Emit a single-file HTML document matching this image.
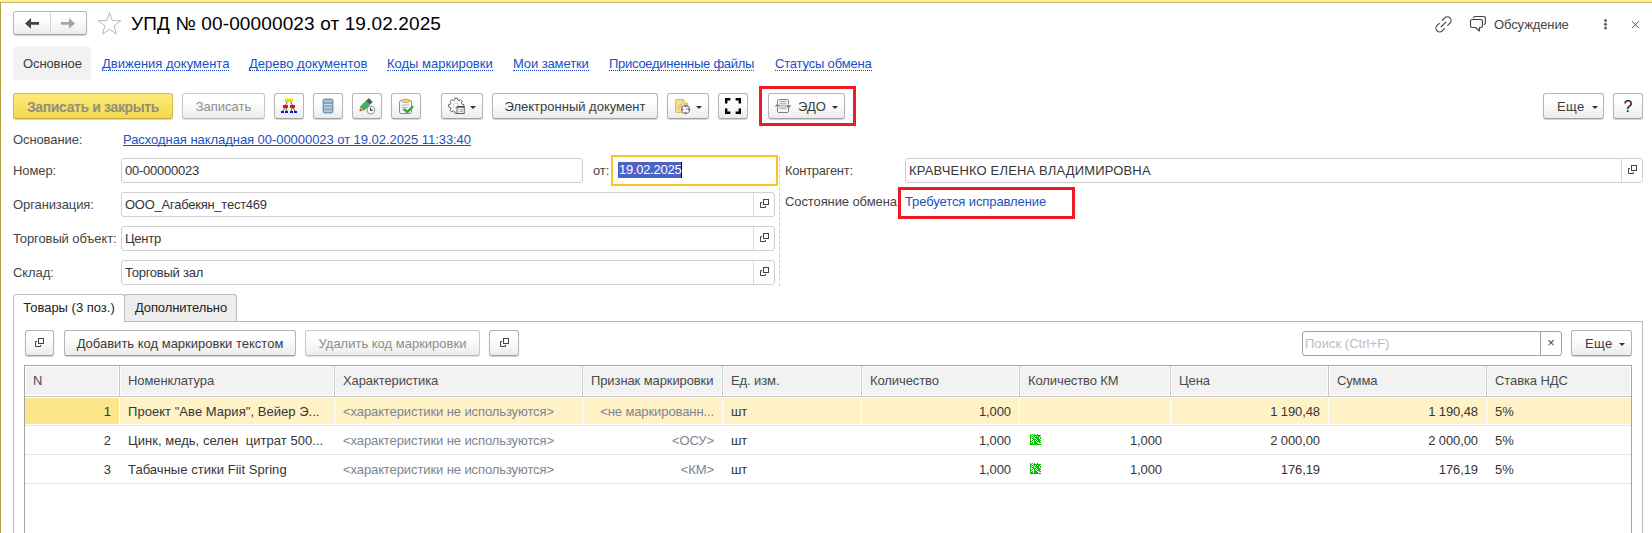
<!DOCTYPE html>
<html lang="ru">
<head>
<meta charset="utf-8">
<title>УПД № 00-00000023 от 19.02.2025</title>
<style>
*{box-sizing:border-box;margin:0;padding:0}
html,body{width:1652px;height:533px;overflow:hidden;background:#fff}
body{font-family:"Liberation Sans",Arial,sans-serif;font-size:13px;color:#454545;position:relative}
.abs{position:absolute}
#frame-top{left:0;top:0;width:1652px;height:3px;background:#fcec9c;border-bottom:1px solid #c8b864}
#frame-left{left:0;top:2px;width:1px;height:531px;background:#b3a347}
.btn{position:absolute;height:26px;border:1px solid #b4b4b4;border-bottom-color:#a2a2a2;border-radius:3px;background:linear-gradient(#ffffff 30%,#ececec);box-shadow:0 1px 1px rgba(0,0,0,.18);font-size:13px;line-height:26px;text-align:center;color:#3c3c3c;white-space:nowrap}
.btn.dis{color:#8e8e8e;border-color:#c8c8c8;border-bottom-color:#b4b4b4;box-shadow:0 1px 1px rgba(0,0,0,.12)}
.btn.yellow{background:linear-gradient(#fdeb78,#f4d94f);border-color:#d3bc4e;border-bottom-color:#c4ab3c;color:#918e7c;font-weight:bold;font-size:14px;letter-spacing:-0.37px}
.btn svg{position:absolute}
.lbl{position:absolute;white-space:nowrap;line-height:16px;height:16px;letter-spacing:-0.1px}
.inp{position:absolute;height:25px;border:1px solid #cfcfcf;border-radius:3px;background:#fff;line-height:23px;padding-left:3px;white-space:nowrap;overflow:hidden;color:#363636;letter-spacing:-0.25px}
.inp .sel{position:absolute;right:0;top:0;width:21px;height:23px;border-left:1px solid #d9d9d9}
a.lnk{color:#2350bf;text-decoration:underline;text-decoration-skip-ink:none;text-underline-offset:1px;text-decoration-thickness:1px}
.nav{position:absolute;top:56px;line-height:16px;color:#1a50c8;white-space:nowrap;border-bottom:1px dotted #1a50c8;height:15px}
.caret{position:absolute;width:0;height:0;border-left:3px solid transparent;border-right:3px solid transparent;border-top:3px solid #333}
.th{position:absolute;top:367px;height:28px;background:#f2f2f2;line-height:27px;color:#4a4a4a;white-space:nowrap;overflow:hidden;letter-spacing:-0.1px}
.td{position:absolute;height:28px;line-height:30px;letter-spacing:-0.1px;white-space:nowrap;overflow:hidden;color:#363636}
.td.r{text-align:right}
.td.g{color:#7d8590}
.rowline{position:absolute;left:25px;width:1606px;height:1px;background:#e6e6e6}
.km{width:11px;height:10px;background:#2fb52f}
</style>
</head>
<body>
<div id="frame-top" class="abs"></div>
<div id="frame-left" class="abs"></div>

<!-- title row -->
<div class="btn" style="left:13px;top:11px;width:74px;height:24px"></div>
<div class="abs" style="left:50px;top:12px;width:1px;height:22px;background:#d4d4d4"></div>
<svg class="abs" style="left:25px;top:17px" width="15" height="13" viewBox="0 0 15 13"><path d="M0 6.4 L6 1.1 V5.1 H14 V7.7 H6 V11.7 Z" fill="#444"/></svg>
<svg class="abs" style="left:60px;top:17px" width="15" height="13" viewBox="0 0 15 13"><path d="M15 6.4 L9 1.1 V5.1 H1 V7.7 H9 V11.7 Z" fill="#a4a4a4"/></svg>
<svg class="abs" style="left:97px;top:11px" width="25" height="25" viewBox="0 0 25 25"><path d="M12.50 1.50 L15.30 9.55 L23.82 9.72 L17.03 14.87 L19.49 23.03 L12.50 18.16 L5.51 23.03 L7.97 14.87 L1.18 9.72 L9.70 9.55 Z" fill="#fff" stroke="#b3bbc3" stroke-width="1"/></svg>
<div class="abs" style="left:131px;top:12px;font-size:19px;line-height:24px;color:#000;white-space:nowrap;letter-spacing:0.13px">УПД № 00-00000023 от 19.02.2025</div>

<svg class="abs" style="left:1433px;top:14px" width="21" height="21" viewBox="0 0 21 21" fill="none" stroke="#444" stroke-width="1.15" stroke-linecap="round"><g transform="translate(10.5,10.4) rotate(-45)"><path d="M2.2 -3.7 H5.5 A3.7 3.7 0 0 1 5.5 3.7 H2.2 M-2.2 -3.7 H-5.5 A3.7 3.7 0 0 0 -5.5 3.7 H-2.2 M-3.3 0 H3.3"/></g></svg>
<svg class="abs" style="left:1469px;top:15px" width="18" height="18" viewBox="0 0 18 18" fill="none" stroke="#444" stroke-width="1.15" stroke-linecap="round" stroke-linejoin="round"><path d="M4.6 2.9 a1.4 1.4 0 0 1 1.4 -1.4 H15 a1.4 1.4 0 0 1 1.4 1.4 V8 a1.4 1.4 0 0 1 -1.2 1.4"/><path d="M2.9 4.5 H12 a1.4 1.4 0 0 1 1.4 1.4 V11.1 a1.4 1.4 0 0 1 -1.4 1.4 H10.6 L10.4 16 L6.6 12.5 H2.9 a1.4 1.4 0 0 1 -1.4 -1.4 V5.9 a1.4 1.4 0 0 1 1.4 -1.4 Z" fill="#fff"/></svg>
<div class="lbl" style="left:1494px;top:17px">Обсуждение</div>
<div class="abs" style="left:1603.6px;top:19.4px;width:3px;height:3px;border-radius:50%;background:#666;box-shadow:0 3.7px 0 #666,0 7.4px 0 #666"></div>
<svg class="abs" style="left:1631px;top:20px" width="9" height="9" viewBox="0 0 9 9" stroke="#555" stroke-width="1"><path d="M1 1.2 L8 8.2 M8 1.2 L1 8.2"/></svg>

<!-- nav row -->
<div class="abs" style="left:13px;top:46px;width:78px;height:34px;background:#f2f2f2;border-radius:4px"></div>
<div class="lbl" style="left:23px;top:56px;color:#3c3c3c">Основное</div>
<div class="nav" style="left:102px">Движения документа</div>
<div class="nav" style="left:249px">Дерево документов</div>
<div class="nav" style="left:387px">Коды маркировки</div>
<div class="nav" style="left:513px;letter-spacing:-0.11px">Мои заметки</div>
<div class="nav" style="left:609px;letter-spacing:-0.27px">Присоединенные файлы</div>
<div class="nav" style="left:775px;letter-spacing:-0.18px">Статусы обмена</div>

<!-- toolbar -->
<div class="btn yellow" style="left:13px;top:93px;width:160px">Записать и закрыть</div>
<div class="btn dis" style="left:182px;top:93px;width:83px">Записать</div>
<div class="btn" style="left:274px;top:93px;width:30px" id="b1"></div>
<div class="btn" style="left:313px;top:93px;width:30px" id="b2"></div>
<div class="btn" style="left:352px;top:93px;width:30px" id="b3"></div>
<div class="btn" style="left:391px;top:93px;width:30px" id="b4"></div>
<div class="btn" style="left:441px;top:93px;width:42px" id="b5"><span class="caret" style="left:28px;top:12px"></span></div>
<div class="btn" style="left:492px;top:93px;width:166px">Электронный документ</div>
<div class="btn" style="left:667px;top:93px;width:42px" id="b6"><span class="caret" style="left:28px;top:12px"></span></div>
<div class="btn" style="left:718px;top:93px;width:30px" id="b7"></div>
<div class="btn" style="left:768px;top:93px;width:77px;text-align:left;padding-left:29px" id="b8">ЭДО<span class="caret" style="left:63px;top:12px"></span></div>
<div class="abs" style="left:759px;top:86px;width:97px;height:40px;border:3px solid #ed1c24"></div>
<div class="btn" style="left:1543px;top:93px;width:61px;text-align:left;padding-left:13px;letter-spacing:0.4px">Еще<span class="caret" style="left:48px;top:12px"></span></div>
<div class="btn" style="left:1613px;top:93px;width:30px;font-size:16px;line-height:25px;color:#111">?</div>


<!-- toolbar icons -->
<svg class="abs" style="left:280px;top:97px" width="18" height="18" viewBox="0 0 18 18">
<path d="M7.5 5 L5.5 8 M10.5 5 L12.5 8 M5 11 L2.8 14 M6 11 L6.8 14 M12 11 L11.2 14 M13 11 L15.2 14" stroke="#333" stroke-width="0.8" fill="none"/>
<rect x="5" y="1" width="8" height="4" fill="#e6e000"/><rect x="5" y="1" width="8" height="1" fill="#f5f060"/>
<rect x="3" y="8" width="5" height="3" fill="#f01010"/><rect x="10" y="8" width="5" height="3" fill="#f01010"/>
<rect x="1" y="14" width="3" height="2" fill="#0018e8"/><rect x="5" y="14" width="3" height="2" fill="#0018e8"/><rect x="10" y="14" width="3" height="2" fill="#0018e8"/><rect x="14" y="14" width="3" height="2" fill="#0018e8"/>
</svg>
<svg class="abs" style="left:322px;top:98px" width="12" height="16" viewBox="0 0 12 16">
<rect x="1" y="1" width="10" height="14" rx="1.5" fill="#84a4c0" stroke="#6a8cab" stroke-width="0.8"/>
<rect x="2" y="2.6" width="8" height="1.2" fill="#c9d9e7"/><rect x="2" y="6" width="8" height="1.2" fill="#c9d9e7"/><rect x="2" y="9.2" width="8" height="1.2" fill="#c9d9e7"/><rect x="2" y="12.4" width="8" height="1.2" fill="#c9d9e7"/>
</svg>
<svg class="abs" style="left:358px;top:97px" width="20" height="18" viewBox="0 0 20 18">
<path d="M1.7 14 L2.82 9.44 L6.28 12.94 Z" fill="#e9b86c" stroke="#a5793a" stroke-width="0.6"/>
<path d="M1.7 14 L2.2 12 L3.7 13.5 Z" fill="#6b4a20"/>
<path d="M2.82 9.44 L8.73 3.62 L12.19 7.12 L6.28 12.94 Z" fill="#41b25f" stroke="#2c8a45" stroke-width="0.8"/>
<path d="M8.73 3.62 L10.93 1.44 L14.39 4.94 L12.19 7.12 Z" fill="#4c5966" stroke="#3e4852" stroke-width="0.6"/>
<circle cx="12.8" cy="13" r="3.9" fill="#fff" stroke="#7896b2" stroke-width="1"/>
<path d="M12.6 10.8 V13.2 H14.8" stroke="#222" stroke-width="1.1" fill="none"/>
</svg>
<svg class="abs" style="left:397px;top:97px" width="18" height="18" viewBox="0 0 18 18">
<rect x="2.5" y="3.5" width="12" height="13" rx="1.5" fill="#f3f7fb" stroke="#7d92a8" stroke-width="1"/>
<rect x="5.5" y="2.3" width="6.5" height="3" rx="1" fill="#fbe07a" stroke="#c9952a" stroke-width="0.9"/>
<path d="M5 8 H12 M5 10.5 H10.5 M5 13 H7" stroke="#9db0c3" stroke-width="0.9"/>
<path d="M7.6 12.6 L10.2 15.2 L15.4 10" stroke="#3aa52a" stroke-width="2.4" fill="none" stroke-linecap="round" stroke-linejoin="round"/>
</svg>
<svg class="abs" style="left:448px;top:97px" width="20" height="18" viewBox="0 0 20 18">
<path d="M7.0 1.2 h2.4 l0.4 1.9 l1.3 0.55 l1.6 -1.1 l1.7 1.7 l-1.1 1.6 l0.55 1.3 l1.9 0.4 v2.4 l-1.9 0.4 l-0.55 1.3 l1.1 1.6 l-1.7 1.7 l-1.6 -1.1 l-1.3 0.55 l-0.4 1.9 h-2.4 l-0.4 -1.9 l-1.3 -0.55 l-1.6 1.1 l-1.7 -1.7 l1.1 -1.6 l-0.55 -1.3 l-1.9 -0.4 v-2.4 l1.9 -0.4 l0.55 -1.3 l-1.1 -1.6 l1.7 -1.7 l1.6 1.1 l1.3 -0.55 Z" fill="#fff" stroke="#555" stroke-width="0.9"/>
<circle cx="8.2" cy="8.4" r="2.6" fill="#fff" stroke="#888" stroke-width="0.8" stroke-dasharray="1.2 0.8"/>
<rect x="9" y="9.5" width="7.2" height="7" fill="#fff" stroke="#4a4a4a" stroke-width="0.9"/>
<rect x="9" y="9.5" width="7.2" height="1.3" fill="#555"/>
<path d="M10.4 12.7 h1 M12.2 12.7 h2.6 M10.4 14.7 h1 M12.2 14.7 h2.6" stroke="#666" stroke-width="0.8"/>
</svg>
<svg class="abs" style="left:674px;top:98px" width="18" height="18" viewBox="0 0 18 18">
<path d="M2.4 1.5 H9.5 L13.5 5.5 V14.5 H2.4 a0.9 0.9 0 0 1 -0.9 -0.9 V2.4 a0.9 0.9 0 0 1 0.9 -0.9 Z" fill="#f5e08e" stroke="#d6b24c" stroke-width="0.9"/>
<path d="M9.5 1.5 V5.5 H13.5" fill="#faedb8" stroke="#d6b24c" stroke-width="0.7"/>
<path d="M3.5 6.6 H5 M6 6.6 H8 M3.5 8.6 H4.3 M5 8.6 H7.5 M3.5 10.6 H6" stroke="#d2b050" stroke-width="0.8"/>
<circle cx="11.6" cy="11.5" r="4" fill="#fff" stroke="#5a8cc4" stroke-width="1.3"/>
<circle cx="11.6" cy="8.6" r="0.75" fill="#e81818"/><circle cx="11.6" cy="14.4" r="0.75" fill="#e81818"/><circle cx="8.7" cy="11.5" r="0.75" fill="#e81818"/><circle cx="14.5" cy="11.5" r="0.75" fill="#e81818"/>
<path d="M11.6 11.5 L13.2 9.6 L13.4 11 Z" fill="#7aa2d6" stroke="#7aa2d6" stroke-width="0.5"/>
</svg>
<svg class="abs" style="left:725px;top:98px" width="16" height="16" viewBox="0 0 16 16">
<path d="M1.2 5.4 V1.2 H5.4 M10.6 1.2 H14.8 V5.4 M14.8 10.6 V14.8 H10.6 M5.4 14.8 H1.2 V10.6" fill="none" stroke="#000" stroke-width="2.4"/>
</svg>
<svg class="abs" style="left:774px;top:98px" width="18" height="16" viewBox="0 0 18 16">
<path d="M3.5 5.5 V2.7 a1.2 1.2 0 0 1 1.2 -1.2 H13.3 a1.2 1.2 0 0 1 1.2 1.2 V6.6 M14.5 10.2 V13.3 a1.2 1.2 0 0 1 -1.2 1.2 H4.7 a1.2 1.2 0 0 1 -1.2 -1.2 V9" fill="none" stroke="#7c7c7c" stroke-width="1"/>
<path d="M5.5 3.6 H12.5 M5.5 5.8 H12.5 M5.5 8 H12.5 M5.5 10.2 H12.5" stroke="#8c8c8c" stroke-width="0.9"/>
<path d="M0.8 8.6 L3.5 5.4 L6.2 8.6 Z" fill="#7c7c7c"/>
<path d="M11.8 7.2 L14.5 10.4 L17.2 7.2 Z" fill="#7c7c7c"/>
</svg>

<!-- form -->
<div class="lbl" style="left:13px;top:132px">Основание:</div>
<div class="lbl" style="left:123px;top:132px;letter-spacing:-0.05px"><a class="lnk">Расходная накладная 00-00000023 от 19.02.2025 11:33:40</a></div>

<div class="lbl" style="left:13px;top:163px">Номер:</div>
<div class="inp" style="left:121px;top:158px;width:462px">00-00000023</div>
<div class="lbl" style="left:593px;top:163px">от:</div>
<div class="abs" style="left:611px;top:155px;width:167px;height:31px;border:2px solid #fbc31c;background:#fff"></div>
<div class="abs" style="left:618px;top:162px;height:16px;line-height:16px;background:#4e62c4;color:#fff;padding:0 0 0 1px;white-space:nowrap;border-right:1px solid #000;letter-spacing:-0.27px">19.02.2025</div>
<div class="lbl" style="left:785px;top:163px;letter-spacing:-0.28px">Контрагент:</div>
<div class="inp" style="left:905px;top:158px;width:738px;letter-spacing:0.16px">КРАВЧЕНКО ЕЛЕНА ВЛАДИМИРОВНА<span class="sel"><svg style="position:absolute;left:5px;top:5px" width="11" height="11" viewBox="0 0 11 11" fill="none" stroke="#444" stroke-width="1"><rect x="4.5" y="1.5" width="5" height="5"/><path d="M3 4.5 H1.5 V9.5 H6.5 V8"/></svg></span></div>

<div class="lbl" style="left:13px;top:197px">Организация:</div>
<div class="inp" style="left:121px;top:192px;width:654px">ООО_Агабекян_тест469<span class="sel"><svg style="position:absolute;left:5px;top:5px" width="11" height="11" viewBox="0 0 11 11" fill="none" stroke="#444" stroke-width="1"><rect x="4.5" y="1.5" width="5" height="5"/><path d="M3 4.5 H1.5 V9.5 H6.5 V8"/></svg></span></div>
<div class="lbl" style="left:785px;top:194px">Состояние обмена:</div>
<div class="lbl" style="left:905px;top:194px;color:#2350bf">Требуется исправление</div>
<div class="abs" style="left:898px;top:187px;width:177px;height:32px;border:3px solid #ed1c24"></div>

<div class="lbl" style="left:13px;top:231px">Торговый объект:</div>
<div class="inp" style="left:121px;top:226px;width:654px">Центр<span class="sel"><svg style="position:absolute;left:5px;top:5px" width="11" height="11" viewBox="0 0 11 11" fill="none" stroke="#444" stroke-width="1"><rect x="4.5" y="1.5" width="5" height="5"/><path d="M3 4.5 H1.5 V9.5 H6.5 V8"/></svg></span></div>
<div class="lbl" style="left:13px;top:265px">Склад:</div>
<div class="inp" style="left:121px;top:260px;width:654px">Торговый зал<span class="sel"><svg style="position:absolute;left:5px;top:5px" width="11" height="11" viewBox="0 0 11 11" fill="none" stroke="#444" stroke-width="1"><rect x="4.5" y="1.5" width="5" height="5"/><path d="M3 4.5 H1.5 V9.5 H6.5 V8"/></svg></span></div>
<div class="abs" style="left:779px;top:157px;width:1px;height:129px;background:repeating-linear-gradient(#d2d2d2 0,#d2d2d2 4px,transparent 4px,transparent 6px)"></div>

<!-- tabs -->
<div class="abs" style="left:13px;top:321px;width:1630px;height:212px;border:1px solid #b8b8b8;border-bottom:none"></div>
<div class="abs" style="left:13px;top:294px;width:112px;height:28px;border:1px solid #bdbdbd;border-bottom:none;border-radius:3px 3px 0 0;background:#fff;line-height:26px;text-align:center;color:#222">Товары (3 поз.)</div>
<div class="abs" style="left:124px;top:294px;width:113px;height:27px;border:1px solid #bdbdbd;border-bottom:none;border-radius:3px 3px 0 0;background:#ededed;line-height:26px;text-align:left;padding-left:10px;letter-spacing:-0.12px;color:#222">Дополнительно</div>

<!-- table toolbar -->
<div class="btn" style="left:25px;top:330px;width:29px" id="t1"><svg style="position:absolute;left:8px;top:6px" width="11" height="11" viewBox="0 0 11 11" fill="none" stroke="#444" stroke-width="1"><rect x="4.5" y="1.5" width="5" height="5"/><path d="M3 4.5 H1.5 V9.5 H6.5 V8"/></svg></div>
<div class="btn" style="left:64px;top:330px;width:232px">Добавить код маркировки текстом</div>
<div class="btn dis" style="left:305px;top:330px;width:175px">Удалить код маркировки</div>
<div class="btn" style="left:489px;top:330px;width:30px" id="t2"><svg style="position:absolute;left:9px;top:6px" width="11" height="11" viewBox="0 0 11 11" fill="none" stroke="#444" stroke-width="1"><rect x="4.5" y="1.5" width="5" height="5"/><path d="M3 4.5 H1.5 V9.5 H6.5 V8"/></svg></div>
<div class="inp" style="left:1302px;top:331px;width:239px;border-radius:3px 0 0 3px;color:#bcbcc2;border-color:#a4a4a4;padding-left:2px;letter-spacing:0.03px">Поиск (Ctrl+F)</div>
<div class="abs" style="left:1540px;top:331px;width:22px;height:25px;border:1px solid #a4a4a4;border-radius:0 3px 3px 0;line-height:22px;text-align:center;color:#444">×</div>
<div class="btn" style="left:1571px;top:330px;width:61px;text-align:left;padding-left:13px;letter-spacing:0.4px">Еще<span class="caret" style="left:47px;top:12px"></span></div>

<!-- table -->
<div class="abs" style="left:24px;top:365px;width:1608px;height:168px;border:1px solid #a6a6a6;border-bottom:none"></div>
<div class="abs" style="left:25px;top:396px;width:1606px;height:1px;background:#c6c6c6"></div>
<div class="th" style="left:26px;width:92px;padding-left:7px">N</div>
<div class="th" style="left:121px;width:212px;padding-left:7px">Номенклатура</div>
<div class="th" style="left:336px;width:245px;padding-left:7px">Характеристика</div>
<div class="th" style="left:584px;width:137px;padding-left:7px">Признак маркировки</div>
<div class="th" style="left:724px;width:136px;padding-left:7px">Ед. изм.</div>
<div class="th" style="left:863px;width:155px;padding-left:7px">Количество</div>
<div class="th" style="left:1021px;width:148px;padding-left:7px">Количество КМ</div>
<div class="th" style="left:1172px;width:155px;padding-left:7px">Цена</div>
<div class="th" style="left:1330px;width:155px;padding-left:7px">Сумма</div>
<div class="th" style="left:1488px;width:142px;padding-left:7px">Ставка НДС</div>
<div class="abs" style="left:119px;top:366px;width:1px;height:30px;background:#c6c6c6"></div>
<div class="abs" style="left:334px;top:366px;width:1px;height:30px;background:#c6c6c6"></div>
<div class="abs" style="left:582px;top:366px;width:1px;height:30px;background:#c6c6c6"></div>
<div class="abs" style="left:722px;top:366px;width:1px;height:30px;background:#c6c6c6"></div>
<div class="abs" style="left:861px;top:366px;width:1px;height:30px;background:#c6c6c6"></div>
<div class="abs" style="left:1019px;top:366px;width:1px;height:30px;background:#c6c6c6"></div>
<div class="abs" style="left:1170px;top:366px;width:1px;height:30px;background:#c6c6c6"></div>
<div class="abs" style="left:1328px;top:366px;width:1px;height:30px;background:#c6c6c6"></div>
<div class="abs" style="left:1486px;top:366px;width:1px;height:30px;background:#c6c6c6"></div>
<div class="abs" style="left:25px;top:398px;width:94px;height:26px;background:#fde58c"></div>
<div class="abs" style="left:120px;top:398px;width:214px;height:26px;background:#fef2c6"></div>
<div class="abs" style="left:335px;top:398px;width:247px;height:26px;background:#fef2c6"></div>
<div class="abs" style="left:583px;top:398px;width:139px;height:26px;background:#fef2c6"></div>
<div class="abs" style="left:723px;top:398px;width:138px;height:26px;background:#fef2c6"></div>
<div class="abs" style="left:862px;top:398px;width:157px;height:26px;background:#fef2c6"></div>
<div class="abs" style="left:1020px;top:398px;width:150px;height:26px;background:#fef2c6"></div>
<div class="abs" style="left:1171px;top:398px;width:157px;height:26px;background:#fef2c6"></div>
<div class="abs" style="left:1329px;top:398px;width:157px;height:26px;background:#fef2c6"></div>
<div class="abs" style="left:1487px;top:398px;width:144px;height:26px;background:#fef2c6"></div>
<div class="rowline" style="top:425px"></div>
<div class="rowline" style="top:454px"></div>
<div class="rowline" style="top:483px"></div>
<!-- row 1 -->
<div class="td r" style="left:26px;top:397px;width:85px">1</div>
<div class="td" style="left:128px;top:397px;width:204px;letter-spacing:0.04px">Проект "Аве Мария", Вейер Э...</div>
<div class="td g" style="left:343px;top:397px;width:237px">&lt;характеристики не используются&gt;</div>
<div class="td g r" style="left:586px;top:397px;width:128px">&lt;не маркированн...</div>
<div class="td" style="left:731px;top:397px;width:100px">шт</div>
<div class="td r" style="left:870px;top:397px;width:141px">1,000</div>
<div class="td r" style="left:1180px;top:397px;width:140px">1 190,48</div>
<div class="td r" style="left:1338px;top:397px;width:140px">1 190,48</div>
<div class="td" style="left:1495px;top:397px;width:100px">5%</div>
<!-- row 2 -->
<div class="td r" style="left:26px;top:426px;width:85px">2</div>
<div class="td" style="left:128px;top:426px;width:204px;letter-spacing:0.04px">Цинк, медь, селен&nbsp; цитрат 500...</div>
<div class="td g" style="left:343px;top:426px;width:237px">&lt;характеристики не используются&gt;</div>
<div class="td g r" style="left:586px;top:426px;width:128px">&lt;ОСУ&gt;</div>
<div class="td" style="left:731px;top:426px;width:100px">шт</div>
<div class="td r" style="left:870px;top:426px;width:141px">1,000</div>
<svg class="abs" style="left:1030px;top:434px" width="11" height="11" viewBox="0 0 11 11" shape-rendering="crispEdges"><path d="M0 0h1v1h-1zM2 0h1v1h-1zM4 0h1v1h-1zM7 0h1v1h-1zM0 1h2v1h-2zM3 1h8v1h-8zM0 2h1v1h-1zM2 2h1v1h-1zM4 2h1v1h-1zM6 2h1v1h-1zM8 2h2v1h-2zM0 3h2v1h-2zM3 3h1v1h-1zM5 3h4v1h-4zM10 3h1v1h-1zM0 4h1v1h-1zM2 4h2v1h-2zM6 4h3v1h-3zM10 4h1v1h-1zM0 5h1v1h-1zM3 5h3v1h-3zM7 5h3v1h-3zM0 6h1v1h-1zM2 6h1v1h-1zM4 6h1v1h-1zM6 6h1v1h-1zM8 6h3v1h-3zM0 7h2v1h-2zM4 7h2v1h-2zM7 7h3v1h-3zM0 8h1v1h-1zM2 8h1v1h-1zM4 8h3v1h-3zM9 8h2v1h-2zM0 9h3v1h-3zM4 9h4v1h-4zM0 10h11v1h-11z" fill="#00c000"/></svg>
<div class="td r" style="left:1050px;top:426px;width:112px">1,000</div>
<div class="td r" style="left:1180px;top:426px;width:140px">2 000,00</div>
<div class="td r" style="left:1338px;top:426px;width:140px">2 000,00</div>
<div class="td" style="left:1495px;top:426px;width:100px">5%</div>
<!-- row 3 -->
<div class="td r" style="left:26px;top:455px;width:85px">3</div>
<div class="td" style="left:128px;top:455px;width:204px;letter-spacing:0.04px">Табачные стики Fiit Spring</div>
<div class="td g" style="left:343px;top:455px;width:237px">&lt;характеристики не используются&gt;</div>
<div class="td g r" style="left:586px;top:455px;width:128px">&lt;КМ&gt;</div>
<div class="td" style="left:731px;top:455px;width:100px">шт</div>
<div class="td r" style="left:870px;top:455px;width:141px">1,000</div>
<svg class="abs" style="left:1030px;top:463px" width="11" height="11" viewBox="0 0 11 11" shape-rendering="crispEdges"><path d="M0 0h1v1h-1zM2 0h1v1h-1zM4 0h1v1h-1zM7 0h1v1h-1zM0 1h2v1h-2zM3 1h8v1h-8zM0 2h1v1h-1zM2 2h1v1h-1zM4 2h1v1h-1zM6 2h1v1h-1zM8 2h2v1h-2zM0 3h2v1h-2zM3 3h1v1h-1zM5 3h4v1h-4zM10 3h1v1h-1zM0 4h1v1h-1zM2 4h2v1h-2zM6 4h3v1h-3zM10 4h1v1h-1zM0 5h1v1h-1zM3 5h3v1h-3zM7 5h3v1h-3zM0 6h1v1h-1zM2 6h1v1h-1zM4 6h1v1h-1zM6 6h1v1h-1zM8 6h3v1h-3zM0 7h2v1h-2zM4 7h2v1h-2zM7 7h3v1h-3zM0 8h1v1h-1zM2 8h1v1h-1zM4 8h3v1h-3zM9 8h2v1h-2zM0 9h3v1h-3zM4 9h4v1h-4zM0 10h11v1h-11z" fill="#00c000"/></svg>
<div class="td r" style="left:1050px;top:455px;width:112px">1,000</div>
<div class="td r" style="left:1180px;top:455px;width:140px">176,19</div>
<div class="td r" style="left:1338px;top:455px;width:140px">176,19</div>
<div class="td" style="left:1495px;top:455px;width:100px">5%</div>

</body>
</html>
